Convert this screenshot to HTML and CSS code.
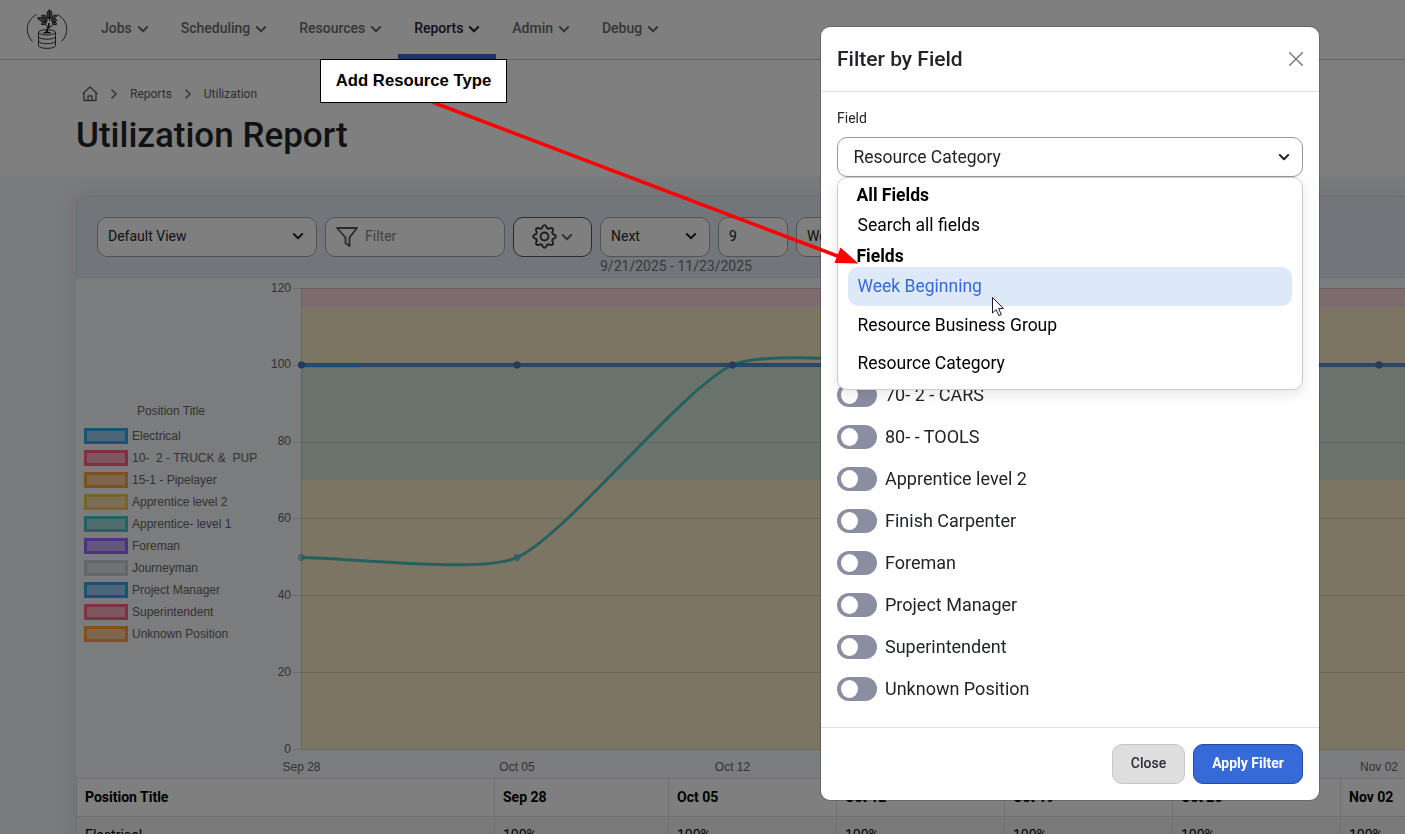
FILE: index.html
```html
<!DOCTYPE html>
<html lang="en">
<head>
  <meta charset="UTF-8" />
  <meta name="viewport" content="width=device-width, initial-scale=1.0"/>
  <title>Utilization Report</title>
  <link rel="stylesheet" href="styles.css">
</head>
<body>
  <!-- shared icons -->
  <svg class="sprite" aria-hidden="true">
    <symbol id="chevron" viewBox="0 0 12 12"><path d="M1.800 4l4.200 4.200L10.200 4" fill="none" stroke="currentColor" stroke-width="2" stroke-linecap="round" stroke-linejoin="round"/></symbol>
    <symbol id="crumb" viewBox="0 0 8 12"><path d="M1.500 1.500L6 6l-4.500 4.500" fill="none" stroke="currentColor" stroke-width="1.700"/></symbol>
  </svg>

  <header class="navbar">
    <svg class="logo" viewBox="0 0 42 42" fill="none" stroke="#222" stroke-width=".9">
      <path d="M10.500 6.500C-1 13-1 26 6.500 33.500M31.500 6.500c11.500 6.500 11.500 19.500 4 27"/>
      <ellipse cx="21" cy="24.300" rx="8.500" ry="2.600"/>
      <path d="M12.500 24.300v13.200c0 3.800 17 3.800 17 0V24.300M12.500 28.500c0 3.600 17 3.600 17 0M12.500 33c0 3.600 17 3.600 17 0"/>
      <path d="M17.500 24.800q3-2 7 0z" fill="#000" stroke="#000"/>
      <path d="M21 24c-.5-4 2.500-4.500 2-9" stroke="#000" stroke-width="1.500"/>
      <path d="M22.800 20c1.500-1 3.500-2 4.500-4M22.500 19c-2-1-3-2-3.500-4" stroke="#000"/>
      <path d="M23.500 1.500c-3.500 3-3 6.500 0 9 3-2.500 3.500-6 0-9zM23.500 3v10M22.500 10.500c-2-3-5-4-7-3 1 2.500 4 4 7 3zM24.500 10.500c2-3 4.500-4 6.500-3-1 2.500-3.500 4-6.500 3zM21.500 12.500c-3-2.500-7-3.500-10-2.500 3 4 7 4.500 10 2.500zM25 12.500c2-2 5-2 6 0-2 2.500-4.500 2-6 0zM20.500 13.500c-3 0-5.500 1-5 3 3 .5 5-.5 5-3zM26.500 14c2.500 0 4.500.5 4 2.500-2.500.5-4.500 0-4-2.500z" stroke="#111" fill="#777"/>
    </svg>
    <nav class="nav-links">
      <a>Jobs <svg><use href="#chevron"/></svg></a>
      <a>Scheduling <svg><use href="#chevron"/></svg></a>
      <a>Resources <svg><use href="#chevron"/></svg></a>
      <a class="active">Reports <svg><use href="#chevron"/></svg></a>
      <a>Admin <svg><use href="#chevron"/></svg></a>
      <a>Debug <svg><use href="#chevron"/></svg></a>
    </nav>
  </header>

  <section class="page-head">
    <div class="breadcrumb">
      <svg class="home" viewBox="0 0 16 16" fill="none" stroke="currentColor" stroke-width="1.300" stroke-linejoin="round"><path d="M.7 7.700L8 .9l7.300 6.800M2 6.800v7.700h12V6.800M6 14.500v-4.500h4v4.500"/></svg>
      <svg class="sep"><use href="#crumb"/></svg>
      <span>Reports</span>
      <svg class="sep"><use href="#crumb"/></svg>
      <span>Utilization</span>
    </div>
    <h1>Utilization Report</h1>
  </section>

  <main class="report">
    <div class="toolbar">
      <div class="control view">Default View <svg><use href="#chevron"/></svg></div>
      <div class="control filter">
        <svg viewBox="0 0 22 22" fill="none" stroke="currentColor" stroke-width="1.800" stroke-linejoin="round"><path d="M1 2h20l-7.500 9.500V20l-4-3v-5.500z"/></svg>
        Filter
      </div>
      <div class="control gear">
        <svg class="cog" viewBox="0 0 24 24" fill="none" stroke="currentColor" stroke-width="1.700" stroke-linejoin="round"><path d="M10.300 2.400q1.700-2.800 3.400 0l.5 1.300 1.500.6 1.300-.6q3.200-.8 2.400 2.400l-.6 1.300.6 1.500 1.300.5q2.800 1.700 0 3.400l-1.300.5-.6 1.500.6 1.300q.8 3.200-2.400 2.400l-1.300-.6-1.500.6-.5 1.300q-1.700 2.800-3.400 0l-.5-1.300-1.500-.6-1.300.6q-3.200.8-2.400-2.400l.6-1.300-.6-1.500-1.300-.5q-2.800-1.700 0-3.400l1.300-.5.6-1.500-.6-1.300q-.8-3.200 2.400-2.400l1.300.6 1.500-.6z"/><circle cx="12" cy="11.100" r="3.500"/></svg>
        <svg><use href="#chevron"/></svg>
      </div>
      <div class="range">
        <div class="control next">Next <svg><use href="#chevron"/></svg></div>
        <div class="dates">9/21/2025 - 11/23/2025</div>
      </div>
      <div class="control count">9</div>
      <div class="control unit">Weeks <svg><use href="#chevron"/></svg></div>
    </div>

    <div class="chart">
      <div class="legend">
        <div class="legend-title">Position Title</div>
        <ul>
          <li class="blue">Electrical</li>
          <li class="pink">10-&nbsp; 2 - TRUCK &amp;&nbsp; PUP</li>
          <li class="orange">15-1 - Pipelayer</li>
          <li class="yellow">Apprentice level 2</li>
          <li class="teal">Apprentice- level 1</li>
          <li class="purple">Foreman</li>
          <li class="grey">Journeyman</li>
          <li class="blue">Project Manager</li>
          <li class="pink">Superintendent</li>
          <li class="orange">Unknown Position</li>
        </ul>
      </div>
      <svg class="plot" width="1145" height="500" viewBox="260 278 1145 500">
        <rect x="301" y="288" width="1104" height="19.500" fill="#f8d9da"/>
        <rect x="301" y="307.500" width="1104" height="57.500" fill="#faeac6"/>
        <rect x="301" y="365" width="1104" height="115.500" fill="#d2e7d6"/>
        <rect x="301" y="480.500" width="1104" height="269" fill="#faeac6"/>
        <path class="grid" d="M293 288.500H1405M293 365.500H1405M293 442.500H1405M293 518.500H1405M293 595.500H1405M293 672.500H1405M293 749.500H1405M301.500 288V749"/>
        <g class="ticks y">
          <text x="291" y="292">120</text>
          <text x="291" y="368">100</text>
          <text x="291" y="445">80</text>
          <text x="291" y="522">60</text>
          <text x="291" y="599">40</text>
          <text x="291" y="676">20</text>
          <text x="291" y="753">0</text>
        </g>
        <g class="ticks x">
          <text x="301.500" y="771">Sep 28</text>
          <text x="517" y="771">Oct 05</text>
          <text x="732.500" y="771">Oct 12</text>
          <text x="948" y="771">Oct 19</text>
          <text x="1163.500" y="771">Oct 26</text>
          <text x="1379" y="771">Nov 02</text>
        </g>
        <path d="M301.500 557.500C344.600 557.500 480 574 517 557.500C566.400 535.400 683.100 387 732.500 365C769.300 348.600 905 365 948 365H1405" fill="none" stroke="#4bc0c0" stroke-width="3"/>
        <g fill="#4bc0c0" fill-opacity=".5" stroke="#4bc0c0"><circle cx="301.500" cy="557.500" r="3"/><circle cx="517" cy="557.500" r="3"/></g>
        <path d="M301.500 365H1405" stroke="#83719c" stroke-width="4"/>
        <path d="M301.500 365.300H1405" stroke="#3a9be2" stroke-width="2.600"/>
        <path d="M301.500 365.500H360" stroke="#36a2eb" stroke-width="3.400"/>
        <g fill="#4a7cc0" stroke="#4a6eb0"><circle cx="301.500" cy="365" r="3.200"/><circle cx="517" cy="365" r="3.200"/><circle cx="732.500" cy="365" r="3.200"/><circle cx="1379" cy="365" r="3.200"/></g>
      </svg>
    </div>

    <table class="grid-table">
      <thead>
        <tr><th class="first">Position Title</th><th class="second">Sep 28</th><th>Oct 05</th><th>Oct 12</th><th>Oct 19</th><th>Oct 26</th><th class="last">Nov 02</th></tr>
      </thead>
      <tbody>
        <tr><td>Electrical</td><td>100%</td><td>100%</td><td>100%</td><td>100%</td><td>100%</td><td>100%</td></tr>
      </tbody>
    </table>
  </main>

  <div class="backdrop"></div>

  <div class="modal">
    <div class="modal-header">
      <h2>Filter by Field</h2>
      <svg class="close-x" viewBox="0 0 14 14"><path d="M.7.700l12.600 12.600M13.300.700L.7 13.300" stroke="currentColor" stroke-width="1.500" stroke-linecap="round"/></svg>
    </div>
    <div class="modal-body">
      <label>Field</label>
      <div class="field">
        <div class="select">Resource Category <svg><use href="#chevron"/></svg></div>
        <div class="dropdown">
          <div class="group">All Fields</div>
          <div class="option all">Search all fields</div>
          <div class="group">Fields</div>
          <div class="option hover">Week Beginning</div>
          <div class="option">Resource Business Group</div>
          <div class="option">Resource Category</div>
        </div>
      </div>
      <ul class="switches">
        <li><i></i>70- 2 - CARS</li>
        <li><i></i>80- - TOOLS</li>
        <li><i></i>Apprentice level 2</li>
        <li><i></i>Finish Carpenter</li>
        <li><i></i>Foreman</li>
        <li><i></i>Project Manager</li>
        <li><i></i>Superintendent</li>
        <li><i></i>Unknown Position</li>
      </ul>
    </div>
    <div class="modal-footer">
      <button class="btn">Close</button>
      <button class="btn primary">Apply Filter</button>
    </div>
  </div>

  <!-- annotation -->
  <svg class="arrow" width="1405" height="834" viewBox="0 0 1405 834">
    <path d="M432 102L840 257" stroke="#f00" stroke-width="3.500"/>
    <path d="M858.500 263.500L840.500 247.500L834.500 263z" fill="#f00"/>
    <path d="M992.500 297.500v15.500l3.600-3.400 2.700 6 2.500-1.100-2.700-5.900h4.900z" fill="#fff" stroke="#1b1b2b"/>
  </svg>
  <div class="callout">Add Resource Type</div>
</body>
</html>
```
FILE: styles.css
```css
*,
*::before {
  box-sizing: border-box;
}

body {
  margin: 0;
  height: 834px;
  overflow: hidden;
  position: relative;
  font-family: Roboto, sans-serif;
  font-size: 14px;
  color: #212529;
  background: #f5f6f9;
}

h1, h2, ul {
  margin: 0;
  padding: 0;
  list-style: none;
}

h1, h2 {
  font-weight: 500;
}

svg {
  display: block;
  flex: none;
  width: 12px;
  height: 12px;
}

.sprite {
  position: absolute;
  width: 0;
  height: 0;
}

/* top bar */
.navbar {
  display: flex;
  height: 60px;
  padding-left: 26px;
  background: #fff;
  border-bottom: 1px solid #c4c4c8;
}

.logo {
  width: 42px;
  height: 42px;
  margin-top: 8px;
}

.nav-links {
  display: flex;
  margin-left: 17px;
}

.nav-links a {
  display: flex;
  align-items: center;
  gap: 5px;
  height: 59px;
  padding: 0 15.900px 3px 16px;
  font-weight: 500;
  color: #6c6c6c;
}

.nav-links a svg {
  margin-top: 2px;
}

.nav-links .active {
  color: #26262c;
  padding-bottom: 0;
  border-top: 2px solid transparent;
  border-bottom: 5px solid #366ad9;
}

/* page heading */
.page-head {
  height: 116px;
  padding: 26px 0 0 76px;
  background: #fff;
}

.breadcrumb {
  display: flex;
  align-items: center;
  height: 16px;
  padding-left: 6px;
  font-size: 12px;
  color: #5c5c60;
}

.breadcrumb .home {
  width: 16px;
  height: 16px;
}

.breadcrumb .sep {
  width: 8px;
  height: 12px;
  margin: 0 12px;
  color: #77777b;
}

h1 {
  margin-top: 13px;
  font-size: 35px;
  line-height: 42px;
}

/* report card, runs to the right edge */
.report {
  margin: 20px 0 0 76px;
  border-radius: 10px 0 0 0;
  box-shadow: 0 0 20px rgba(40, 50, 80, .12);
}

.toolbar {
  display: flex;
  gap: 8px;
  height: 82px;
  padding: 20px;
  background: #e5ebf5;
  border: 1px solid #d5deef;
  border-right: 0;
  border-radius: 10px 0 0 0;
}

.control {
  display: flex;
  align-items: center;
  justify-content: space-between;
  height: 40px;
  padding: 0 12px 2px 10px;
  background: #fff;
  border: 1px solid #a5a5a8;
  border-radius: 10px;
}

.control.view { width: 220px; }
.control.next { width: 110px; }
.control.count { width: 70px; }
.control.unit { width: 110px; }

.control.filter {
  width: 180px;
  justify-content: flex-start;
  gap: 7px;
  color: #85858c;
}

.control.filter svg {
  width: 22px;
  height: 22px;
  margin-top: 2px;
  color: #55555b;
}

.control.gear {
  width: 79px;
  justify-content: center;
  gap: 3px;
  padding: 0 1px 0 0;
  border-color: #55555b;
  color: #66666b;
}

.control .cog {
  width: 27px;
  height: 27px;
  margin-top: 1px;
  color: #3c3c42;
}

.dates {
  width: 110px;
  margin-top: 1px;
  white-space: nowrap;
  color: #707078;
}

.chart {
  display: flex;
  height: 500px;
  background: #f7f8fb;
}

.legend {
  width: 184px;
  padding: 125px 0 0 8px;
  font: 12px/16px "Liberation Sans", Arial, sans-serif;
  color: #666;
}

.legend-title {
  padding-left: 53px;
  margin-bottom: 9px;
}

.legend li {
  display: flex;
  align-items: center;
  gap: 4px;
  height: 16px;
  margin-bottom: 6px;
  white-space: nowrap;
}

.legend li::before {
  content: "";
  width: 44px;
  height: 16px;
  flex: none;
  border: 3px solid var(--c);
  background: color-mix(in srgb, var(--c) 50%, transparent);
}

.blue { --c: #36a2eb; }
.pink { --c: #ff6384; }
.orange { --c: #ff9f40; }
.yellow { --c: #f5c451; }
.teal { --c: #4bc0c0; }
.purple { --c: #9966ff; }
.grey { --c: #c9cbcf; }

.plot {
  width: 1145px;
  height: 500px;
}

.grid {
  fill: none;
  stroke: rgba(0, 0, 0, .12);
}

.ticks {
  font: 12px "Liberation Sans", Arial, sans-serif;
  fill: #666;
}

.ticks.y { text-anchor: end; }
.ticks.x { text-anchor: middle; }

.grid-table {
  table-layout: fixed;
  width: 100%;
  border-collapse: collapse;
  color: #000;
}

.grid-table th,
.grid-table td {
  height: 38px;
  padding: 0 8px 1px;
  text-align: left;
  white-space: nowrap;
  background: #fff;
  border: 1px solid #dcdfe4;
}

.grid-table tr > :last-child {
  border-right: 0;
}

.grid-table td {
  background: #f2f2f2;
}

.grid-table th {
  width: 168px;
  font-weight: 700;
}

.grid-table .first { width: 418px; }
.grid-table .second { width: 174px; }
.grid-table .last { width: auto; }

/* modal */
.backdrop {
  position: fixed;
  inset: 0;
  background: rgba(0, 0, 0, .5);
}

.modal {
  position: fixed;
  top: 27px;
  left: 821px;
  width: 498px;
  height: 773px;
  display: flex;
  flex-direction: column;
  background: #fff;
  border-radius: 9px;
  box-shadow: 0 0 0 1px rgba(0, 0, 0, .18);
}

.modal-header {
  display: flex;
  align-items: center;
  justify-content: space-between;
  height: 65px;
  padding: 0 16px;
  border-bottom: 1px solid #dee2e6;
}

h2 {
  font-size: 21px;
}

.close-x {
  width: 14px;
  height: 14px;
  color: #7c7c7c;
}

.modal-body {
  flex: 1;
  padding: 18px 16px 0;
}

.modal-body label {
  display: block;
  height: 27px;
  line-height: 16px;
}

.field {
  position: relative;
  margin-bottom: 206px;
}

.select {
  display: flex;
  align-items: center;
  justify-content: space-between;
  height: 40px;
  padding: 0 12px 1px 15.500px;
  font-size: 17.500px;
  border: 1px solid #98989c;
  border-radius: 10px;
}

.dropdown {
  position: absolute;
  top: 40px;
  left: 0;
  right: 0;
  height: 213px;
  padding: 2px 10px 0;
  font-size: 17.500px;
  color: #000;
  background: #fff;
  border: 1px solid #ccc;
  border-radius: 10px;
  box-shadow: 0 4px 14px rgba(0, 0, 0, .1);
}

.group {
  height: 30px;
  padding-left: 8.500px;
  line-height: 30px;
  font-weight: 700;
}

.option {
  height: 38.500px;
  padding-left: 9.500px;
  line-height: 38px;
  border-radius: 10px;
}

.option.all {
  height: 30px;
  line-height: 30px;
}

.all + .group {
  height: 27px;
  line-height: 32px;
}

.option.hover {
  color: #366ad9;
  background: #dde8f9;
}

.switches li {
  display: flex;
  align-items: center;
  gap: 8px;
  height: 24px;
  margin-bottom: 18px;
  font-size: 18px;
  line-height: 22px;
}

.switches i {
  width: 40px;
  height: 24px;
  padding: 3px 4px;
  background: #8b8da1;
  border-radius: 12px;
}

.switches i::before {
  content: "";
  display: block;
  width: 17px;
  height: 18px;
  background: #fff;
  border-radius: 50%;
}

.modal-footer {
  display: flex;
  justify-content: flex-end;
  gap: 8px;
  height: 73px;
  padding: 16px;
  border-top: 1px solid #dee2e6;
}

.btn {
  height: 40px;
  width: 73px;
  padding: 0 0 2px;
  font: 500 14px Roboto, sans-serif;
  color: #2d2d36;
  background: #dedede;
  border: 1px solid #c6c6c6;
  border-radius: 10px;
}

.btn.primary {
  width: 110px;
  font-weight: 700;
  color: #fff;
  background: #366ad9;
  border-color: #27489f;
}

/* annotation */
.arrow {
  position: fixed;
  top: 0;
  left: 0;
  width: 1405px;
  height: 834px;
}

.callout {
  position: fixed;
  top: 59px;
  left: 320px;
  width: 187px;
  height: 44px;
  font: bold 16.700px/42px "Liberation Sans", Arial, sans-serif;
  text-align: center;
  color: #000;
  background: #fff;
  border: 1px solid #000;
}
```
